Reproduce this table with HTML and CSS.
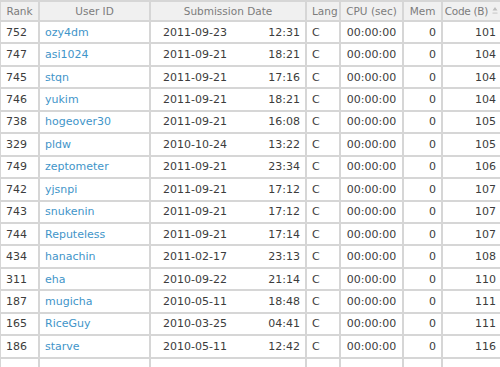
FILE: index.html
```html
<!DOCTYPE html>
<html>
<head>
<meta charset="utf-8">
<link rel="stylesheet" href="styles.css">
</head>
<body>
<table class="ranking">
  <colgroup>
    <col class="c-rank"><col class="c-user"><col class="c-date"><col class="c-lang"><col class="c-cpu"><col class="c-mem"><col class="c-code">
  </colgroup>
  <thead>
    <tr>
      <th>Rank</th><th>User ID</th><th>Submission Date</th><th>Lang</th><th>CPU (sec)</th><th>Mem</th>
      <th class="sorted">Code (B)<svg class="sort" width="6" height="9" viewBox="0 0 6 9"><path d="M3 1 L5.5 4.5 L0.5 4.5 Z" fill="#bdbdbd"/><rect x="0.5" y="6.5" width="5" height="1.2" fill="#cccccc"/></svg></th>
    </tr>
  </thead>
  <tbody>
    <tr><td>752</td><td><a href="#">ozy4dm</a></td><td class="date">2011-09-23<span class="time">12:31</span></td><td>C</td><td class="cpu">00:00:00</td><td class="num">0</td><td class="num">101</td></tr>
    <tr><td>747</td><td><a href="#">asi1024</a></td><td class="date">2011-09-21<span class="time">18:21</span></td><td>C</td><td class="cpu">00:00:00</td><td class="num">0</td><td class="num">104</td></tr>
    <tr><td>745</td><td><a href="#">stqn</a></td><td class="date">2011-09-21<span class="time">17:16</span></td><td>C</td><td class="cpu">00:00:00</td><td class="num">0</td><td class="num">104</td></tr>
    <tr><td>746</td><td><a href="#">yukim</a></td><td class="date">2011-09-21<span class="time">18:21</span></td><td>C</td><td class="cpu">00:00:00</td><td class="num">0</td><td class="num">104</td></tr>
    <tr><td>738</td><td><a href="#">hogeover30</a></td><td class="date">2011-09-21<span class="time">16:08</span></td><td>C</td><td class="cpu">00:00:00</td><td class="num">0</td><td class="num">105</td></tr>
    <tr><td>329</td><td><a href="#">pldw</a></td><td class="date">2010-10-24<span class="time">13:22</span></td><td>C</td><td class="cpu">00:00:00</td><td class="num">0</td><td class="num">105</td></tr>
    <tr><td>749</td><td><a href="#">zeptometer</a></td><td class="date">2011-09-21<span class="time">23:34</span></td><td>C</td><td class="cpu">00:00:00</td><td class="num">0</td><td class="num">106</td></tr>
    <tr><td>742</td><td><a href="#">yjsnpi</a></td><td class="date">2011-09-21<span class="time">17:12</span></td><td>C</td><td class="cpu">00:00:00</td><td class="num">0</td><td class="num">107</td></tr>
    <tr><td>743</td><td><a href="#">snukenin</a></td><td class="date">2011-09-21<span class="time">17:12</span></td><td>C</td><td class="cpu">00:00:00</td><td class="num">0</td><td class="num">107</td></tr>
    <tr><td>744</td><td><a href="#">Reputeless</a></td><td class="date">2011-09-21<span class="time">17:14</span></td><td>C</td><td class="cpu">00:00:00</td><td class="num">0</td><td class="num">107</td></tr>
    <tr><td>434</td><td><a href="#">hanachin</a></td><td class="date">2011-02-17<span class="time">23:13</span></td><td>C</td><td class="cpu">00:00:00</td><td class="num">0</td><td class="num">108</td></tr>
    <tr><td>311</td><td><a href="#">eha</a></td><td class="date">2010-09-22<span class="time">21:14</span></td><td>C</td><td class="cpu">00:00:00</td><td class="num">0</td><td class="num">110</td></tr>
    <tr><td>187</td><td><a href="#">mugicha</a></td><td class="date">2010-05-11<span class="time">18:48</span></td><td>C</td><td class="cpu">00:00:00</td><td class="num">0</td><td class="num">111</td></tr>
    <tr><td>165</td><td><a href="#">RiceGuy</a></td><td class="date">2010-03-25<span class="time">04:41</span></td><td>C</td><td class="cpu">00:00:00</td><td class="num">0</td><td class="num">111</td></tr>
    <tr><td>186</td><td><a href="#">starve</a></td><td class="date">2010-05-11<span class="time">12:42</span></td><td>C</td><td class="cpu">00:00:00</td><td class="num">0</td><td class="num">116</td></tr>
    <tr><td>&nbsp;</td><td></td><td></td><td></td><td></td><td></td><td></td></tr>
  </tbody>
</table>
</body>
</html>
```

FILE: styles.css
```css
html, body {
  margin: 0;
  padding: 0;
  background: #ffffff;
  overflow: hidden;
}

.ranking {
  border-collapse: collapse;
  table-layout: fixed;
  width: 502px;
  margin-left: -1px;
  font-family: "DejaVu Sans", Verdana, sans-serif;
  font-size: 11px;
  color: #3c3c3c;
}

.c-rank { width: 39px; }
.c-user { width: 111px; }
.c-date { width: 156px; }
.c-lang { width: 34px; }
.c-cpu { width: 63px; }
.c-mem { width: 39px; }
.c-code { width: 60px; }

.ranking th,
.ranking td {
  border: 2px solid #d6d6d6;
  padding: 0 5px;
  white-space: nowrap;
  overflow: hidden;
}

.ranking th {
  height: 17px;
  padding-bottom: 1px;
  background: #f0f0f0;
  color: #7c7c7c;
  font-size: 10.5px;
  font-weight: normal;
  text-align: center;
}

.ranking td {
  height: 20.45px;
  text-align: left;
}

.ranking th.sorted {
  padding: 0 3px 1px 0;
  text-align: right;
  letter-spacing: -0.3px;
}

.sort {
  vertical-align: 0;
  margin-left: 4px;
}

.ranking a {
  color: #3f95c9;
  text-decoration: none;
}

.ranking td.date {
  padding: 0 5px 0 12px;
}

.time {
  float: right;
}

.ranking td.cpu {
  text-align: center;
  padding: 0;
}

.ranking td.num {
  text-align: right;
}
```
